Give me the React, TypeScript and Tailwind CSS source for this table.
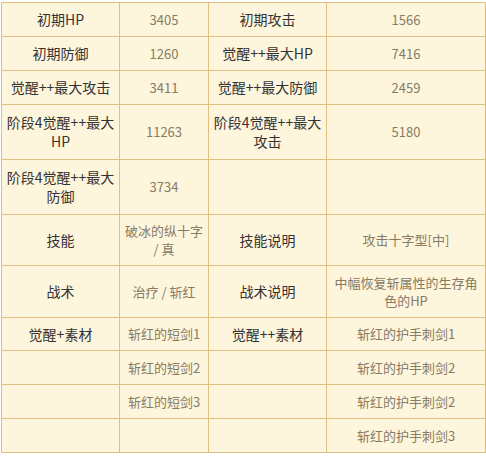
import React from 'react';

type Cell = { text: React.ReactNode; label?: boolean };

const L = (text: React.ReactNode): Cell => ({ text, label: true });
const V = (text: React.ReactNode): Cell => ({ text });
const E: Cell = { text: '' };

// row heights measured from the screenshot (border to border)
const heights = [
  'h-[34px]', 'h-[34px]', 'h-[34px]', 'h-[55px]', 'h-[55px]', 'h-[51px]',
  'h-[52px]', 'h-[33px]', 'h-[34px]', 'h-[34px]', 'h-[34px]',
];

const rows: Cell[][] = [
  [L('初期HP'), V('3405'), L('初期攻击'), V('1566')],
  [L('初期防御'), V('1260'), L('觉醒++最大HP'), V('7416')],
  [L('觉醒++最大攻击'), V('3411'), L('觉醒++最大防御'), V('2459')],
  [
    L(<>阶段4觉醒++最大<br />HP</>),
    V('11263'),
    L(<>阶段4觉醒++最大<br />攻击</>),
    V('5180'),
  ],
  [L(<>阶段4觉醒++最大<br />防御</>), V('3734'), E, E],
  [L('技能'), V(<>破冰的纵十字<br />/ 真</>), L('技能说明'), V('攻击十字型[中]')],
  [L('战术'), V('治疗 / 斩红'), L('战术说明'), V(<>中幅恢复斩属性的生存角<br />色的HP</>)],
  [L('觉醒+素材'), V('斩红的短剑1'), L('觉醒++素材'), V('斩红的护手刺剑1')],
  [E, V('斩红的短剑2'), E, V('斩红的护手刺剑2')],
  [E, V('斩红的短剑3'), E, V('斩红的护手刺剑2')],
  [E, E, E, V('斩红的护手刺剑3')],
];

export default function App() {
  return (
    <div className="min-h-[456px] bg-white pt-[2px] pl-[1px]">
      <table
        className="table-fixed border-collapse bg-[#fef5dd] w-[484px]"
        style={{ fontFamily: '"Noto Sans CJK SC", "Noto Sans", sans-serif' }}
      >
        <colgroup>
          <col className="w-[118px]" />
          <col className="w-[89px]" />
          <col className="w-[118px]" />
          <col className="w-[159px]" />
        </colgroup>
        <tbody>
          {rows.map((row, i) => (
            <tr key={i} className={heights[i]}>
              {row.map((cell, j) => (
                <td
                  key={j}
                  className={
                    cell.label
                      ? 'border border-[#e1bf82] px-[2px] py-0 text-center align-middle text-[14px] leading-[19px] text-[#333333]'
                      : 'border border-[#e1bf82] px-[2px] py-0 text-center align-middle text-[13px] leading-[18px] text-[#877b63]'
                  }
                >
                  {cell.text}
                </td>
              ))}
            </tr>
          ))}
        </tbody>
      </table>
    </div>
  );
}
